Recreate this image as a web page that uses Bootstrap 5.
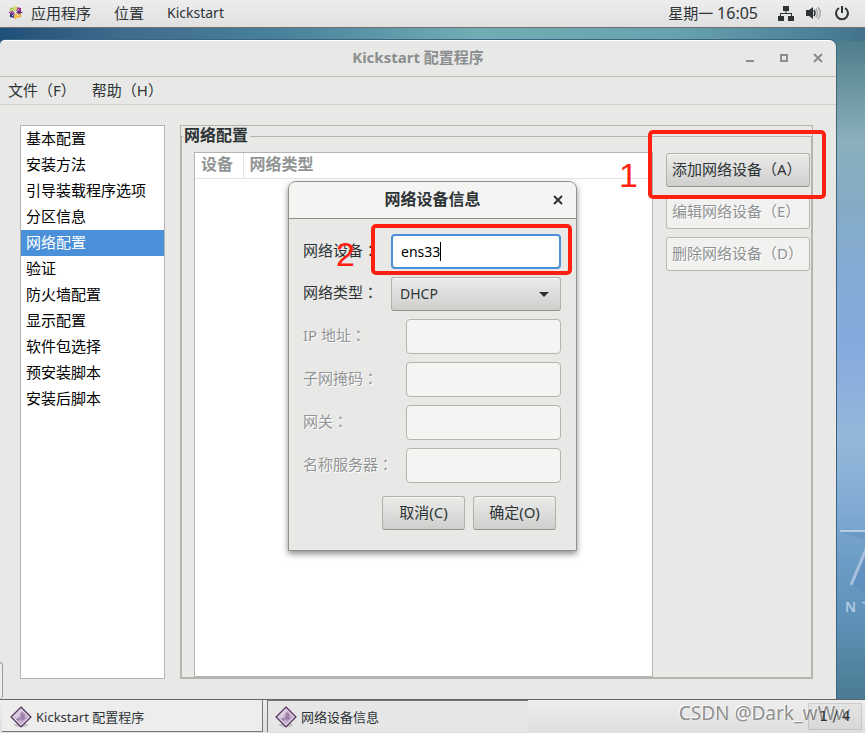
<!DOCTYPE html>
<html lang="zh-CN">
<head>
<meta charset="utf-8">
<meta name="viewport" content="width=device-width, initial-scale=1">
<title>Kickstart 配置程序</title>
<link href="https://cdn.jsdelivr.net/npm/bootstrap@5.3.0/dist/css/bootstrap.min.css" rel="stylesheet">
<style>
body{font-family:"Noto Sans","Noto Sans CJK SC",sans-serif;font-size:15px;line-height:20px;color:#2e3436;background:#e8e8e6}
.latin{font-size:14px}
.topbar{height:28px;border-bottom:1px solid #707070;background:linear-gradient(#ededed,#e0e0e0);padding:0 15px 2px 8px}
.topbar a{color:inherit}
.places{gap:23px}
.status{gap:12px}
.clock{font-size:16px}
.desk{padding:12px 29px 0 0;background:linear-gradient(90deg,#1f5078,#3f6b8c 14%,#48829c 33%,#72adb5 55%,#68a2ae 78%,#4b7f98 95%,#42728c) top/100% 13px no-repeat,linear-gradient(#457585,#6f9aa3 10%,#8ab0bc 17%,#84acc4 25%,#84abd2 35%,#85aade 47%,#94b8da 61%,#84add5 70%,#6d9dc6 79%,#5f91b8 88%,#4a7b92)}
.win{background:#e8e8e6;border-radius:5px 7px 0 0;border-top:1px solid #fff;box-shadow:0 0 0 1px #3a6480}
.win-title{height:36px;border-bottom:1px solid #bcbcb9;color:#8b8e8f}
.caption{font-size:15px;font-weight:700;padding-bottom:3px}
.win-tools{right:11px;top:10px;gap:20px}
.tool{width:14px;height:14px;padding:0;border:0;background:none;color:inherit;line-height:0}
.menubar{height:28px;border-bottom:1px solid #d2d2cf;padding:0 8px 2px;gap:16px}
.menubar a{color:inherit}
.win-body{padding:20px 23px 20px 20px;gap:15px}
.steps{width:145px;background:#fff;border:1px solid #b4b4b1;color:#000}
.steps a{display:block;height:26px;line-height:24px;padding:0 5px;color:#000}
.steps a.active{background:#4a90d9;color:#fff}
.frame{border:1px solid #b4b4b1}
.frame fieldset{border:1px solid #b4b4b1;padding:0 1px 0 12px;min-width:0}
.frame legend{float:none;width:auto;margin:0 0 6px -11px;padding:0 2px 2px 1px;font-size:16px;line-height:18px;font-weight:700}
.frame-row{gap:13px}
.tree{background:#fff;border:1px solid #b4b4b1}
.tree table{width:100%;color:#929595;font-size:16px}
.tree th{height:25px;line-height:20px;padding:0 6px 2px;border-bottom:1px solid #e4e4e4}
.tree th:first-child{width:48px;border-right:1px solid #e4e4e4}
.side{width:144px;gap:8px;padding-top:1px}
.gbtn{height:34px;padding:0 5px 3px;border:1px solid #b0b0ad;border-bottom-color:#949490;border-radius:3px;background:linear-gradient(#ebebea,#cfcfcd);font-size:15px;line-height:20px;color:#2e3436;text-align:left;white-space:nowrap;box-shadow:inset 0 1px #f6f6f5}
.gbtn:disabled{background:#f1f1f0;border-color:#b8b8b5;color:#8f9292;opacity:1;text-shadow:1px 1px #fff}
.ring{border:4px solid #ff2010;border-radius:5px;pointer-events:none}
.ring-add{inset:-23px -16px -12px -18px}
.ring-dev{inset:-10px -11px -6px -20px}
.mark-no{font-family:"Liberation Sans",sans-serif;font-size:34px;line-height:34px;color:#ff2010}
.mark-one{left:-47px;top:5px}
.mark-two{left:33px;top:3px}
.dialog{left:288px;top:153px;width:289px;border:1px solid #90908c;border-radius:8px 8px 0 0;background:#e8e8e6;box-shadow:0 3px 6px #00000073}
.dialog header{height:37px;padding-bottom:2px;background:#f4f4f3;border-bottom:1px solid #8e8f7e;border-radius:7px 7px 0 0;font-size:16px;font-weight:700}
.dialog .close-x{right:11px;top:11px}
.dialog form{padding:15px 15px 20px 14px}
.rows{gap:8px}
.rows label{padding-bottom:4px}
.rows label span{font-family:"Noto Sans CJK TC",sans-serif}
.entry{height:35px;border:1px solid #b4b4b1;border-radius:4px;background:#f4f4f2;padding:0 8px;font-size:14px;color:#000;box-shadow:none}
.entry.short{width:155px}
.entry.wide{width:170px}
.entry.live{background:#fff;border:2px solid #4a90d9}
.off{color:#929595;text-shadow:1px 1px #fff}
select.gbtn{appearance:none;height:34px;width:170px;padding:0 8px;font-size:14px}
.arrow{right:12px;top:15px}
.caret{left:49px;top:8px;width:1px;height:19px;background:#000}
.dlg-actions{gap:8px;padding:13px 5px 0 0}
.dlg-actions .gbtn{width:83px;text-align:center}
.under-tab{left:-6px;top:634px;width:9px;bottom:0;border:1px solid #9a9a98;border-bottom:0;border-radius:4px;background:#eee}
.taskbar{height:34px;border-top:1px solid #646464;background:linear-gradient(#ededed,#dedede);padding:0 3px 0 2px;gap:4px;font-size:13px}
.task{width:261px;height:32px;border:0;border-right:1px solid #777;border-bottom:1px solid #777;background:#ededed;padding:2px 8px 0;gap:4px;color:#2e3436;font-size:13px}
.task.on{height:32px;background:#e6e6e6;border:0;border-left:1px solid #777;border-top:1px solid #777;padding:1px 7px 0}
.pager{width:54px;height:27px;margin-top:3px;border:1px solid #00000018;background:#00000008;font-family:"DejaVu Sans",sans-serif;font-size:14px;line-height:25px}
.credit{right:15px;bottom:7px;font-size:19px;line-height:26px;color:#909090;text-shadow:-1px -1px #fff}
.wall{right:0;top:472px}
</style>
</head>
<body class="d-flex flex-column min-vh-100 overflow-hidden">
<nav class="topbar d-flex align-items-center justify-content-between">
  <div class="places d-flex align-items-center">
    <a class="text-decoration-none d-flex align-items-center gap-2" href="#"><svg width="15" height="15" viewBox="0 0 15 15" aria-hidden="true"><path d="M2 3l5-1v5H2z" fill="#a5c75a"/><path d="M8 2l5 1v4H8z" fill="#9b2e83"/><path d="M2 8h5v5l-5-1z" fill="#33307f"/><path d="M8 8h5v4l-5 1z" fill="#eda93b"/><path d="M7.500 0l2 3-2 4-2-4z" fill="#d5e07a"/><path d="M15 7.500L11 9 8 7.500 11 6z" fill="#5b3b85"/><path d="M7.500 15l-2-4 2-3 2 3z" fill="#f0c15b"/><path d="M0 7.500L4 6l3 1.500L4 9z" fill="#b64f9f"/><path d="M4 4l7 7M11 4l-7 7" stroke="#fff" stroke-width=".7"/></svg>应用程序</a>
    <a class="text-decoration-none" href="#">位置</a>
    <a class="text-decoration-none latin" href="#">Kickstart</a>
  </div>
  <div class="status d-flex align-items-center">
    <span class="me-2">星期一 <span class="clock">16:05</span></span>
    <svg width="16" height="16" viewBox="0 0 16 16" fill="#2e3436" aria-hidden="true"><path d="M5 1h6v5H8.500v2H14v3h2v5h-6v-5h3V9H3v2h3v5H0v-5h2V8h5.500V6H5z"/></svg>
    <svg width="16" height="16" viewBox="0 0 16 16" aria-hidden="true"><path d="M0 5h3l4-3v12l-4-3H0z" fill="#2e3436"/><path d="M8 5q2 3 0 6" fill="none" stroke="#2e3436" stroke-width="1.500"/><path d="M10 3.500q3 4.500 0 9M12 2q4.500 6 0 12" fill="none" stroke="#a9abac" stroke-width="1.500"/></svg>
    <svg width="16" height="16" viewBox="0 0 16 16" fill="none" stroke="#2e3436" stroke-width="2" aria-hidden="true"><path d="M5 3a6 6 0 1 0 6 0M8 1v7"/></svg>
  </div>
</nav>

<main class="desk flex-grow-1 d-flex flex-column position-relative">
  <svg class="wall position-absolute" width="28" height="120" viewBox="0 0 28 120" aria-hidden="true"><path d="M3 32h25v8z" fill="#5c8dbc" opacity=".5"/><path d="M28 55v38l-12-8z" fill="#5a87bd" opacity=".5"/><path d="M3 31h25" stroke="#b6cde5" stroke-width="2"/><path d="M30 47L14 85" stroke="#a8c0df" stroke-width="3"/><text x="8" y="112" fill="#b2cbe2" font-size="14" font-weight="600">N</text><text x="25" y="112" fill="#b2cbe2" font-size="14">T</text></svg>
  <section class="win flex-grow-1 d-flex flex-column position-relative">
    <header class="win-title d-flex align-items-center justify-content-center position-relative">
      <span class="caption">Kickstart 配置程序</span>
      <div class="win-tools d-flex position-absolute">
        <button class="tool" aria-label="最小化"><svg width="14" height="14"><path d="M3 10h8" stroke="currentColor" stroke-width="2"/></svg></button>
        <button class="tool" aria-label="最大化"><svg width="14" height="14"><path d="M4 4h6v6H4z" fill="none" stroke="currentColor" stroke-width="2"/></svg></button>
        <button class="tool" aria-label="关闭"><svg width="14" height="14"><path d="M3 3l8 8M11 3l-8 8" stroke="currentColor" stroke-width="2"/></svg></button>
      </div>
    </header>
    <nav class="menubar d-flex align-items-center">
      <a class="text-decoration-none" href="#">文件（F）</a>
      <a class="text-decoration-none" href="#">帮助（H）</a>
    </nav>
    <div class="win-body d-flex flex-grow-1">
      <nav class="steps flex-shrink-0">
        <a class="text-decoration-none" href="#">基本配置</a>
        <a class="text-decoration-none" href="#">安装方法</a>
        <a class="text-decoration-none" href="#">引导装载程序选项</a>
        <a class="text-decoration-none" href="#">分区信息</a>
        <a class="text-decoration-none active" href="#">网络配置</a>
        <a class="text-decoration-none" href="#">验证</a>
        <a class="text-decoration-none" href="#">防火墙配置</a>
        <a class="text-decoration-none" href="#">显示配置</a>
        <a class="text-decoration-none" href="#">软件包选择</a>
        <a class="text-decoration-none" href="#">预安装脚本</a>
        <a class="text-decoration-none" href="#">安装后脚本</a>
      </nav>
      <div class="frame flex-grow-1 d-flex">
        <fieldset class="flex-grow-1 d-flex flex-column">
          <legend>网络配置</legend>
          <div class="frame-row d-flex flex-grow-1">
            <div class="tree flex-grow-1">
              <table><thead><tr><th scope="col">设备</th><th scope="col">网络类型</th></tr></thead></table>
            </div>
            <div class="side d-flex flex-column flex-shrink-0">
              <div class="position-relative d-grid">
                <button class="gbtn" type="button">添加网络设备（A）</button>
                <span class="ring ring-add position-absolute z-1"></span>
                <span class="mark-no mark-one position-absolute">1</span>
              </div>
              <button class="gbtn" type="button" disabled>编辑网络设备（E）</button>
              <button class="gbtn" type="button" disabled>删除网络设备（D）</button>
            </div>
          </div>
        </fieldset>
      </div>
    </div>
  </section>
  <span class="under-tab position-absolute"></span>

  <section class="dialog position-absolute" role="dialog" aria-labelledby="dlg">
    <header class="d-flex align-items-center justify-content-center position-relative">
      <span id="dlg">网络设备信息</span>
      <button class="tool close-x position-absolute" aria-label="关闭"><svg width="14" height="14"><path d="M3 3l8 8M11 3l-8 8" stroke="currentColor" stroke-width="2"/></svg></button>
    </header>
    <form>
      <div class="rows d-flex flex-column">
        <div class="d-flex align-items-center justify-content-between position-relative">
          <label for="dev">网络设备<span lang="zh-TW">：</span></label>
          <span class="mark-no mark-two position-absolute">2</span>
          <div class="position-relative">
            <input id="dev" class="entry wide live d-block" value="ens33">
            <span class="caret position-absolute"></span>
            <span class="ring ring-dev position-absolute"></span>
          </div>
        </div>
        <div class="d-flex align-items-center justify-content-between">
          <label for="type">网络类型<span lang="zh-TW">：</span></label>
          <div class="position-relative">
            <select id="type" class="gbtn d-block"><option>DHCP</option></select>
            <svg class="arrow position-absolute" width="10" height="5" aria-hidden="true"><path d="M0 0h10L5 5z" fill="#2e3436"/></svg>
          </div>
        </div>
        <div class="d-flex align-items-center justify-content-between"><label class="off" for="ip">IP 地址<span lang="zh-TW">：</span></label><input id="ip" class="entry short" disabled></div>
        <div class="d-flex align-items-center justify-content-between"><label class="off" for="sub">子网掩码<span lang="zh-TW">：</span></label><input id="sub" class="entry short" disabled></div>
        <div class="d-flex align-items-center justify-content-between"><label class="off" for="gw">网关<span lang="zh-TW">：</span></label><input id="gw" class="entry short" disabled></div>
        <div class="d-flex align-items-center justify-content-between"><label class="off" for="ns">名称服务器<span lang="zh-TW">：</span></label><input id="ns" class="entry short" disabled></div>
      </div>
      <div class="dlg-actions d-flex justify-content-end">
        <button class="gbtn" type="button">取消(C)</button>
        <button class="gbtn" type="button">确定(O)</button>
      </div>
    </form>
  </section>
</main>

<svg class="d-none"><symbol id="gem" viewBox="0 0 22 22"><ellipse cx="11" cy="19" rx="7" ry="2" fill="#999" opacity=".5"/><path d="M11 1l10 10-10 10L1 11z" fill="#c4b0cc" stroke="#57355f" stroke-width="1.200"/><path d="M11 3l8 8-8 8-8-8z" fill="none" stroke="#efe7f2" stroke-width=".8"/><path d="M12 6l3 3-1 2 2 1-4 3-1-2-3 2-2-2 4-1 1-3-1-1z" fill="#8d6d9b" opacity=".7"/><path d="M4 11l7-7 1 1-5 7z" fill="#e4d8e8" opacity=".8"/></symbol></svg>
<footer class="taskbar d-flex align-items-start position-relative">
  <button class="task d-flex align-items-center"><svg width="22" height="22"><use href="#gem"/></svg>Kickstart 配置程序</button>
  <button class="task on d-flex align-items-center"><svg width="22" height="22"><use href="#gem"/></svg>网络设备信息</button>
  <span class="credit position-absolute">CSDN @Dark_wWw</span>
  <span class="pager ms-auto text-center position-relative">1 / 4</span>
</footer>
<script src="https://cdn.jsdelivr.net/npm/bootstrap@5.3.0/dist/js/bootstrap.bundle.min.js"></script>
</body>
</html>
